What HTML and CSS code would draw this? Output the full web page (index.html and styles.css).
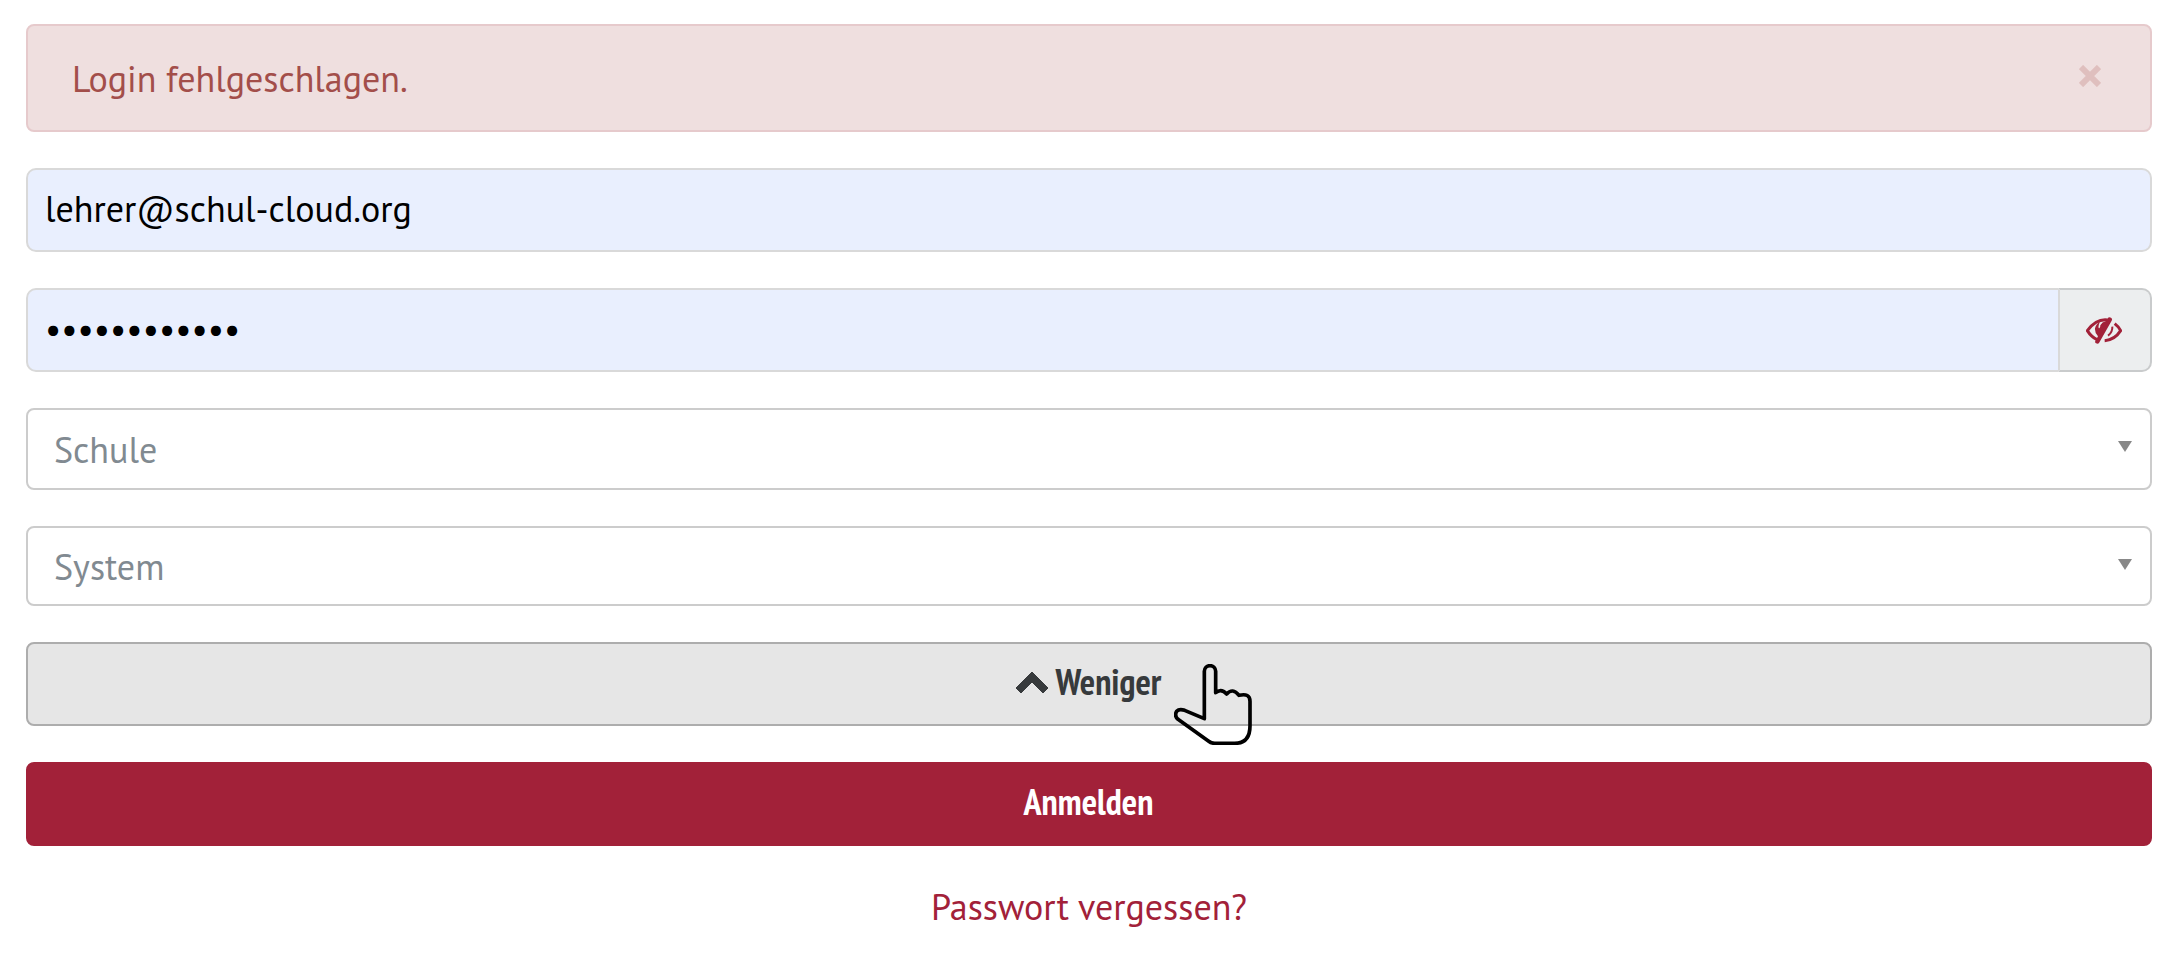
FILE: index.html
```html
<!DOCTYPE html>
<html lang="de">
<head>
<meta charset="utf-8">
<meta name="viewport" content="width=device-width, initial-scale=1">
<title>Anmelden</title>
<link rel="stylesheet" href="styles.css">
</head>
<body>
<form class="login" action="#">
  <div class="alert" role="alert">
    <span>Login fehlgeschlagen.</span>
    <button class="alert-close" type="button" aria-label="Schließen">
      <svg class="icon-close" viewBox="0 0 22 22" aria-hidden="true"><path d="M2 2l18 18M20 2L2 20"/></svg>
    </button>
  </div>
  <input class="field" type="text" aria-label="E-Mail" value="lehrer@schul-cloud.org">
  <div class="password-group">
    <input class="field field-password" type="password" aria-label="Passwort" value="geheim123456">
    <button class="password-toggle" type="button" aria-label="Passwort anzeigen">
      <svg class="icon-eye" viewBox="0 0 108 81" aria-hidden="true">
        <path class="eye-line" d="M64 9Q31 5 4 41Q16 60 33 68"/>
        <path class="eye-fill" d="M66 2Q71-1 76 3Q80 6 77 11L39 78Q36 82 30 79Q26 77 28 72L36 58Q26 48 27 34Q30 20 42 15Q36 24 38 33Q43 36 43 25Q48 15 60 12Z"/>
        <path class="eye-line" d="M86 20Q98 29 104 41Q86 69 56 71"/>
        <path class="eye-line eye-iris" d="M79 29Q80 46 66 56"/>
      </svg>
    </button>
  </div>
  <div class="select-wrap">
    <select class="select" aria-label="Schule"><option>Schule</option></select>
  </div>
  <div class="select-wrap">
    <select class="select select-compact" aria-label="System"><option>System</option></select>
  </div>
  <div class="toggle-wrap">
    <button class="btn btn-secondary" type="button">
      <svg class="icon-chevron" viewBox="0 0 32 26" aria-hidden="true"><path d="M16 3L32 19L27 24L16 13L5 24L0 19Z"/></svg>
      <span>Weniger</span>
    </button>
    <svg class="pointer" viewBox="0 0 234 243" aria-hidden="true"><path d="M91 164V22a17 17 0 0 1 34 0V86Q142 72 158 90Q176 70 195 94Q228 86 228 112V185Q228 238 182 238H122Q112 238 103 231L12 166Q0 155 8 142Q16 133 32 139Z"/></svg>
  </div>
  <button class="btn btn-primary" type="submit">Anmelden</button>
  <a class="forgot" href="#">Passwort vergessen?</a>
</form>
</body>
</html>
```
FILE: styles.css
```css
* {
  box-sizing: border-box;
}

body {
  margin: 0;
  background: #fff;
  font-family: "PT Sans", "Noto Sans", sans-serif;
  font-size: 36px;
  line-height: 50px;
}

button,
input,
select {
  margin: 0;
  font: inherit;
}

.login {
  display: flex;
  flex-direction: column;
  gap: 36px;
  padding: 24px 32px 24px 26px;
}

.alert {
  display: flex;
  align-items: flex-start;
  justify-content: space-between;
  padding: 28px 49px 26px 44px;
  border: 2px solid #e6cacc;
  border-radius: 8px;
  background: #efdfdf;
  color: #a34e4a;
}

.alert-close {
  display: flex;
  padding: 11px 0;
  border: 0;
  background: none;
}

.icon-close {
  width: 22px;
  height: 22px;
  fill: none;
  stroke: #dfbfbe;
  stroke-width: 6;
}

.field {
  width: 100%;
  height: 84px;
  padding: 0 17px 3px;
  border: 2px solid #d9d9d9;
  border-radius: 10px;
  background: #e9effe;
  color: #000;
}

.password-group {
  display: flex;
}

.field-password {
  flex: 1;
  border-right: 0;
  border-radius: 10px 0 0 10px;
}

.password-toggle {
  display: flex;
  align-items: center;
  justify-content: center;
  width: 94px;
  padding: 0 2px 0 0;
  border: 2px solid #c9cbcc;
  border-left-color: #d9d9d9;
  border-radius: 0 10px 10px 0;
  background: #eceeef;
}

.icon-eye {
  width: 36px;
  height: 27px;
}

.eye-line {
  fill: none;
  stroke: #a22139;
  stroke-width: 9;
}

.eye-iris {
  stroke-width: 6;
}

.eye-fill {
  fill: #a22139;
}

.select-wrap {
  position: relative;
}

.select-wrap::after {
  content: "";
  position: absolute;
  top: 33px;
  right: 20px;
  border: 7px solid transparent;
  border-top: 11px solid #888;
  border-bottom: 0;
}

.select {
  display: block;
  width: 100%;
  height: 82px;
  padding: 2px 26px 0;
  border: 2px solid #ccc;
  border-radius: 8px;
  appearance: none;
  background: #fff;
  color: #818a91;
}

.select-compact {
  height: 80px;
}

.toggle-wrap {
  position: relative;
}

.btn {
  display: flex;
  align-items: center;
  justify-content: center;
  gap: 8px;
  width: 100%;
  height: 84px;
  padding: 0 1px 5px 0;
  border: 2px solid #adadad;
  border-radius: 8px;
  font-family: "PT Sans Narrow", "Noto Sans", sans-serif;
  font-weight: 700;
}

.btn-secondary {
  background: #e6e6e6;
  color: #373a3c;
}

.btn-primary {
  border-color: #a22139;
  background: #a22139;
  color: #fff;
}

.icon-chevron {
  width: 32px;
  height: 26px;
  fill: #373a3c;
  stroke: #373a3c;
  stroke-width: 1;
  stroke-linejoin: round;
}

.pointer {
  position: absolute;
  top: 22px;
  left: calc(50% + 85px);
  width: 78px;
  height: 81px;
  fill: none;
  stroke: #000;
  stroke-width: 11;
  stroke-linejoin: round;
}

.forgot {
  align-self: center;
  color: #a22139;
  text-decoration: none;
}
```
